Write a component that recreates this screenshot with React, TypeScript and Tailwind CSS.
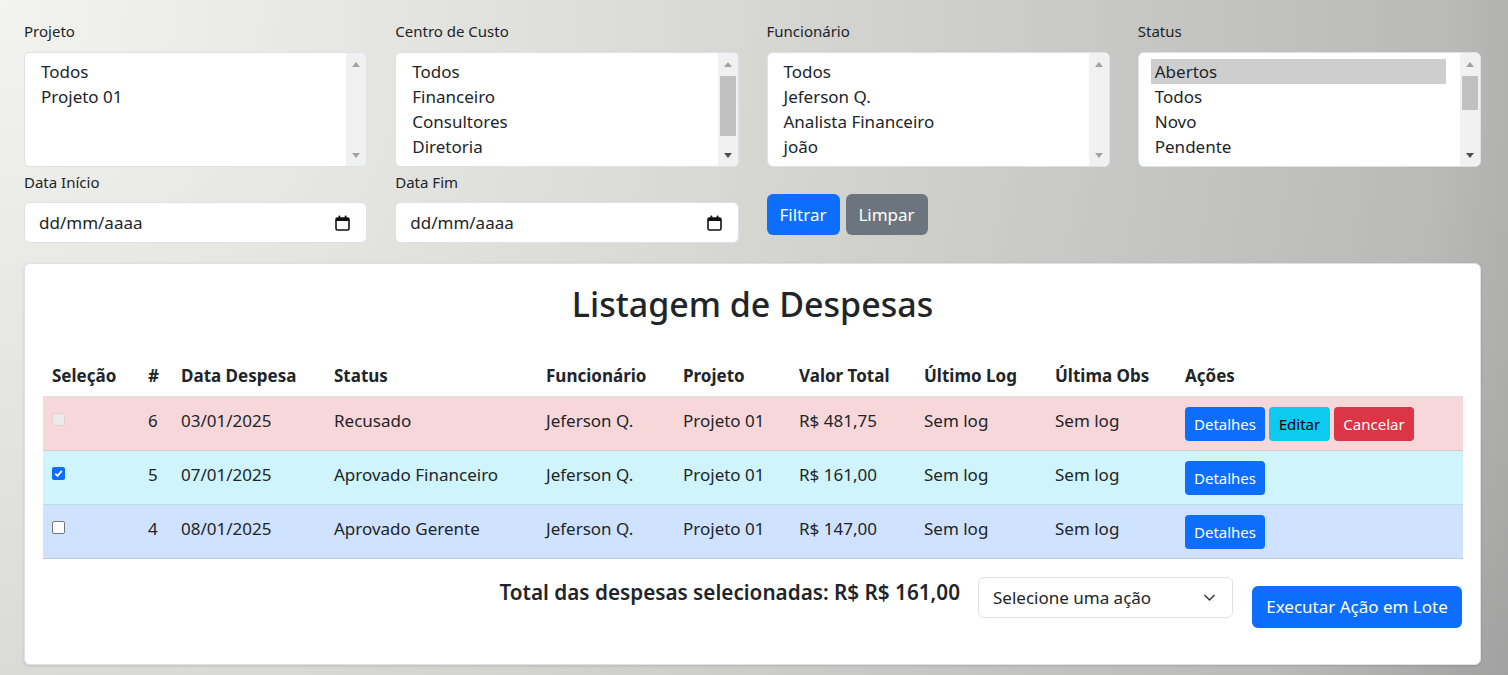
import React from "react";

const FONT = "font-['Segoe_UI','Noto_Sans','Liberation_Sans',sans-serif]";

type ListItem = { label: string; selected?: boolean };

function Arrow({ up, active }: { up?: boolean; active?: boolean }) {
  return (
    <div className="flex h-[22px] w-full items-center justify-center">
      <svg width="8" height="5" viewBox="0 0 8 5">
        <path
          d={up ? "M0 5 L4 0 L8 5 Z" : "M0 0 L4 5 L8 0 Z"}
          fill={active ? "#505050" : "#a3a3a3"}
        />
      </svg>
    </div>
  );
}

function ScrollBar({ thumb }: { thumb?: string }) {
  return (
    <div className="flex w-[20px] shrink-0 flex-col bg-[#f1f1f1]">
      <Arrow up />
      <div className="flex-1 px-[2px]">
        {thumb && <div className={`w-full bg-[#c1c1c1] ${thumb}`} />}
      </div>
      <Arrow active={!!thumb} />
    </div>
  );
}

function ListBox({ items, thumb }: { items: ListItem[]; thumb?: string }) {
  return (
    <div className="flex h-[115px] overflow-hidden rounded-[6px] border border-[#dee2e6] bg-white">
      <div className="flex-1 overflow-hidden pl-[12px] pr-[14px] pt-[6px] text-[17px] text-[#212529]">
        {items.map((it) => (
          <div
            key={it.label}
            className={`h-[25px] truncate px-[4px] leading-[25px] ${it.selected ? "bg-[#cecece]" : ""}`}
          >
            {it.label}
          </div>
        ))}
      </div>
      <ScrollBar thumb={thumb} />
    </div>
  );
}

function CalendarIcon() {
  return (
    <svg width="15" height="16" viewBox="0 0 15 16" fill="none">
      <rect x="1" y="3" width="13" height="12" rx="1.5" stroke="#111" strokeWidth="1.6" />
      <rect x="1" y="3" width="13" height="3" fill="#111" />
      <rect x="3.5" y="0.5" width="1.8" height="3.5" rx="0.6" fill="#111" />
      <rect x="9.7" y="0.5" width="1.8" height="3.5" rx="0.6" fill="#111" />
    </svg>
  );
}

function DateField({ label }: { label: string }) {
  return (
    <div>
      <div className="mb-[9px] text-[15px] leading-[22px] text-[#212529]">{label}</div>
      <div className="flex h-[41px] items-center justify-between rounded-[6px] border border-[#dee2e6] bg-white pl-[14px] pr-[16px] text-[17px] text-[#212529]">
        <span>dd/mm/aaaa</span>
        <CalendarIcon />
      </div>
    </div>
  );
}

type Row = {
  id: number;
  date: string;
  status: string;
  valor: string;
  bg: string;
  border: string;
  check: "disabled" | "checked" | "empty";
  full?: boolean;
};

const rows: Row[] = [
  { id: 6, date: "03/01/2025", status: "Recusado", valor: "R$ 481,75", bg: "bg-[#f8d7da]", border: "border-[#dfc2c4]", check: "disabled", full: true },
  { id: 5, date: "07/01/2025", status: "Aprovado Financeiro", valor: "R$ 161,00", bg: "bg-[#cff4fc]", border: "border-[#badce3]", check: "checked" },
  { id: 4, date: "08/01/2025", status: "Aprovado Gerente", valor: "R$ 147,00", bg: "bg-[#cfe2ff]", border: "border-[#bacbe6]", check: "empty" },
];

function CheckBox({ kind }: { kind: Row["check"] }) {
  if (kind === "checked")
    return (
      <span className="mt-[6px] flex h-[13px] w-[13px] items-center justify-center rounded-[2px] bg-[#0d6efd]">
        <svg width="9" height="9" viewBox="0 0 9 9">
          <path d="M1.2 4.6 L3.5 6.9 L7.8 1.8" stroke="#fff" strokeWidth="1.8" fill="none" />
        </svg>
      </span>
    );
  if (kind === "disabled")
    return <span className="mt-[6px] block h-[13px] w-[13px] rounded-[2px] border border-[#dcd3d4] bg-[#efe8e9]" />;
  return <span className="mt-[6px] block h-[13px] w-[13px] rounded-[2px] border border-[#767676] bg-white" />;
}

const headers = [
  "Seleção",
  "#",
  "Data Despesa",
  "Status",
  "Funcionário",
  "Projeto",
  "Valor Total",
  "Último Log",
  "Última Obs",
  "Ações",
];
const widths = ["w-[96px]", "w-[33px]", "w-[153px]", "w-[212px]", "w-[137px]", "w-[116px]", "w-[125px]", "w-[131px]", "w-[130px]", "w-[287px]"];

function Btn({ children, color, w }: { children: React.ReactNode; color: string; w: string }) {
  return (
    <span className={`flex h-[34px] items-center justify-center rounded-[4px] text-[15px] ${color} ${w}`}>
      {children}
    </span>
  );
}

const cell = "px-[9px] pt-[12px] align-top leading-[24px]";

export default function App() {
  return (
    <div
      className={`min-h-screen bg-[radial-gradient(circle_at_0_0,#f3f3ef_0px,#d9d9d5_700px,#b9b9b8_1450px,#9e9e9e_1680px)] pb-[11px] pl-[24px] pr-[27px] pt-[20px] ${FONT}`}
    >
      <div className="grid grid-cols-4 gap-x-[28px]">
        {[
          { label: "Projeto", items: [{ label: "Todos" }, { label: "Projeto 01" }] },
          {
            label: "Centro de Custo",
            items: [{ label: "Todos" }, { label: "Financeiro" }, { label: "Consultores" }, { label: "Diretoria" }, { label: "Fornecedores" }],
            thumb: "mt-[1px] h-[60px]",
          },
          {
            label: "Funcionário",
            items: [{ label: "Todos" }, { label: "Jeferson Q." }, { label: "Analista Financeiro" }, { label: "joão" }],
          },
          {
            label: "Status",
            items: [
              { label: "Abertos", selected: true },
              { label: "Todos" },
              { label: "Novo" },
              { label: "Pendente" },
              { label: "Aprovado Financeiro" },
            ],
            thumb: "mt-[1px] h-[34px]",
          },
        ].map((f) => (
          <div key={f.label}>
            <div className="mb-[10px] text-[15px] leading-[22px] text-[#212529]">{f.label}</div>
            <ListBox items={f.items} thumb={f.thumb} />
          </div>
        ))}
      </div>

      <div className="mt-[4px] grid grid-cols-4 gap-x-[28px]">
        <DateField label="Data Início" />
        <DateField label="Data Fim" />
        <div className="mt-[23px] flex gap-[6px]">
          <span className="flex h-[41px] w-[73px] items-center justify-center rounded-[6px] bg-[#0d6efd] text-[17px] text-white">
            Filtrar
          </span>
          <span className="flex h-[41px] w-[82px] items-center justify-center rounded-[6px] bg-[#6c757d] text-[17px] text-white">
            Limpar
          </span>
        </div>
      </div>

      <div className="mt-[20px] rounded-[6px] border border-[#dee2e6] bg-white px-[18px] pb-[36px] pt-[20px] shadow-[0_1px_3px_rgba(0,0,0,0.12)]">
        <h2 className="mb-[30px] text-center text-[34px] font-medium leading-[40px] text-[#212529]">
          Listagem de Despesas
        </h2>

        <table className="w-full table-fixed border-collapse text-[17px] text-[#212529]">
          <colgroup>
            {widths.map((w, i) => (
              <col key={i} className={w} />
            ))}
          </colgroup>
          <thead>
            <tr className="border-b border-[#dee2e6]">
              {headers.map((h) => (
                <th key={h} className="px-[9px] pb-[8px] pt-[10px] text-left font-bold leading-[24px]">
                  {h}
                </th>
              ))}
            </tr>
          </thead>
          <tbody>
            {rows.map((r) => (
              <tr key={r.id} className={`border-b ${r.bg} ${r.border}`}>
                <td className="px-[9px] pb-[9px] pt-[10px] align-top">
                  <CheckBox kind={r.check} />
                </td>
                <td className={cell}>{r.id}</td>
                <td className={cell}>{r.date}</td>
                <td className={cell}>{r.status}</td>
                <td className={cell}>Jeferson Q.</td>
                <td className={cell}>Projeto 01</td>
                <td className={cell}>{r.valor}</td>
                <td className={cell}>Sem log</td>
                <td className={cell}>Sem log</td>
                <td className="px-[9px] pb-[9px] pt-[10px] align-top">
                  <div className="flex gap-[4px]">
                    <Btn color="bg-[#0d6efd] text-white" w="w-[80px]">Detalhes</Btn>
                    {r.full && (
                      <>
                        <Btn color="bg-[#0dcaf0] text-black" w="w-[61px]">Editar</Btn>
                        <Btn color="bg-[#dc3545] text-white" w="w-[80px]">Cancelar</Btn>
                      </>
                    )}
                  </div>
                </td>
              </tr>
            ))}
          </tbody>
        </table>

        <div className="mt-[18px] flex items-start justify-end">
          <div className="mr-[18px] text-[20.7px] font-semibold leading-[30px] text-[#212529]">
            Total das despesas selecionadas: R$ R$ 161,00
          </div>
          <div className="flex h-[41px] w-[255px] items-center justify-between rounded-[6px] border border-[#dee2e6] bg-white pl-[14px] pr-[16px] text-[17px] text-[#212529]">
            <span>Selecione uma ação</span>
            <svg width="13" height="9" viewBox="0 0 13 9" fill="none">
              <path d="M1.5 2 L6.5 7 L11.5 2" stroke="#343a40" strokeWidth="1.5" />
            </svg>
          </div>
          <span className="ml-[19px] mt-[9px] flex h-[42px] w-[210px] items-center justify-center rounded-[6px] bg-[#0d6efd] text-[17px] text-white">
            Executar Ação em Lote
          </span>
        </div>
      </div>
    </div>
  );
}
